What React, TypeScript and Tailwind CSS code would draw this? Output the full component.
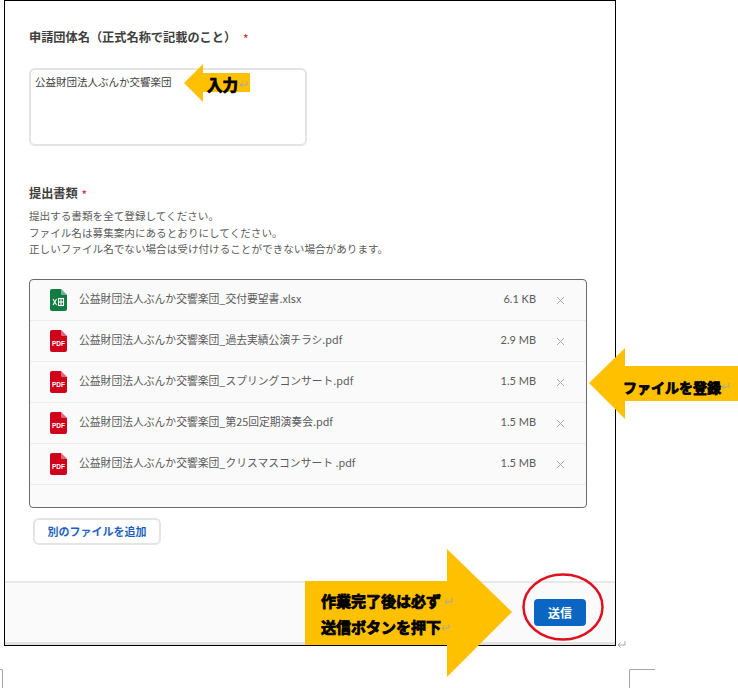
import React from 'react'

const jp = '[font-family:"Noto_Sans_CJK_JP","Liberation_Sans",sans-serif]'

const files = [
  { name: '公益財団法人ぶんか交響楽団_交付要望書.xlsx', size: '6.1 KB', type: 'xlsx' },
  { name: '公益財団法人ぶんか交響楽団_過去実績公演チラシ.pdf', size: '2.9 MB', type: 'pdf' },
  { name: '公益財団法人ぶんか交響楽団_スプリングコンサート.pdf', size: '1.5 MB', type: 'pdf' },
  { name: '公益財団法人ぶんか交響楽団_第25回定期演奏会.pdf', size: '1.5 MB', type: 'pdf' },
  { name: '公益財団法人ぶんか交響楽団_クリスマスコンサート .pdf', size: '1.5 MB', type: 'pdf' },
]

const FileIcon = ({ type }: { type: string }) => {
  const color = type === 'pdf' ? '#d0021b' : '#107c41'
  return (
    <svg width="17" height="22" viewBox="0 0 17 22" className="shrink-0">
      <path d="M2 0H11L17 6V20a2 2 0 0 1-2 2H2a2 2 0 0 1-2-2V2a2 2 0 0 1 2-2Z" fill={color} />
      <path d="M11 0L17 6H12a1 1 0 0 1-1-1Z" fill="#fff" fillOpacity="0.4" />
      {type === 'pdf' ? (
        <text x="8.5" y="16" textAnchor="middle" fontSize="6.5" fontWeight="700" fill="#fff" fontFamily="Liberation Sans">PDF</text>
      ) : (
        <g fill="none" stroke="#fff" strokeWidth="1.1">
          <path d="M3 10l3.5 6M6.5 10L3 16" />
          <rect x="8.5" y="9.5" width="5" height="7" />
          <path d="M8.5 13h5M11 9.5v7" />
        </g>
      )}
    </svg>
  )
}

const ReturnMark = ({ className }: { className: string }) => (
  <svg width="9" height="9" viewBox="0 0 9 9" className={`absolute ${className}`}>
    <path d="M8 1v4H1M3.5 2.5L1 5l2.5 2.5" fill="none" stroke="#a6a6a6" strokeWidth="1" />
  </svg>
)

const Note = ({ className, children }: { className: string; children: React.ReactNode }) => (
  <span className={`absolute whitespace-nowrap font-bold text-black [-webkit-text-stroke:0.8px_black] ${className}`}>{children}</span>
)

export default function App() {
  return (
    <div className={`relative w-[738px] h-[688px] overflow-hidden bg-white ${jp}`}>
      <div className="ml-1 flex h-[646px] w-[612px] flex-col border border-black bg-white">
        <div className="flex-1 pl-[24px] pr-[29px]">
          <div className="mt-[27px] flex h-[18px] items-center text-[12.2px] font-bold text-[#3e3e3c]">
            申請団体名（正式名称で記載のこと）<span className="ml-[7px] text-[10px] text-[#d0404a]">*</span>
          </div>
          <div className="mt-[22px] h-[78px] w-[278px] rounded-md border-2 border-[#e4e4e4] px-[4px] py-[4px] text-[10.5px] leading-[16px] text-[#3e3e3c]">
            公益財団法人ぶんか交響楽団
          </div>
          <div className="mt-[38px] flex h-[18px] items-center text-[12.2px] font-bold text-[#3e3e3c]">
            提出書類<span className="ml-[4px] text-[10px] text-[#d0404a]">*</span>
          </div>
          <div className="mt-[6px] text-[10.6px] leading-[16.5px] text-[#5c5c5c]">
            <p>提出する書類を全て登録してください。</p>
            <p>ファイル名は募集案内にあるとおりにしてください。</p>
            <p>正しいファイル名でない場合は受け付けることができない場合があります。</p>
          </div>
          <div className="mt-[21px] h-[229px] w-[558px] rounded border border-[#6b6b6b] bg-[#fafafa]">
            {files.map((f) => (
              <div key={f.name} className="flex h-[41px] items-center border-b border-[#eeeeee] pl-[20px] pr-[21px] text-[#5a5a5a]">
                <FileIcon type={f.type} />
                <span className="ml-[12px] -mt-0.5 flex-1 text-[10.8px]">{f.name}</span>
                <span className="-mt-px text-[11px] [font-family:Lato,sans-serif]">{f.size}</span>
                <svg width="9" height="9" viewBox="0 0 9 9" className="ml-[20px] mt-0.5">
                  <path d="M1 1l7 7M8 1l-7 7" stroke="#a8a8a8" strokeWidth="1" />
                </svg>
              </div>
            ))}
          </div>
          <button className="ml-[4px] mt-[10px] flex h-[27px] w-[128px] items-center justify-center rounded-md border-2 border-[#e4e4e4] bg-white text-[11px] font-bold text-[#1e62c0]">
            別のファイルを追加
          </button>
        </div>
        <div className="flex h-[64px] shrink-0 items-start justify-end border-t-2 border-b-[3px] border-t-[#e8e8e8] border-b-[#e2e2e2] bg-[#fafafa] pr-[29px] pt-[16px]">
          <button className="h-[27px] w-[52px] rounded bg-[#0b66c3] text-[12px] font-bold text-white">送信</button>
        </div>
      </div>

      {/* annotations on top of the screenshot */}
      <svg width="738" height="688" viewBox="0 0 738 688" className="absolute left-0 top-0">
        <path d="M184 83L203 64V73H250V92H203V102Z" fill="#ffc000" />
        <path d="M589 383L625 348V366H738V401H625V419Z" fill="#ffc000" />
        <path d="M305 581H447V549L512 612L447 677V645H305Z" fill="#ffc000" />
        <ellipse cx="563" cy="607" rx="39.5" ry="32.5" fill="none" stroke="#e0101e" strokeWidth="2.5" />
        <path d="M2.5 669.5V688M0 669.5H2.5M629.5 688V669.5H655" fill="none" stroke="#a6a6a6" strokeWidth="1" />
      </svg>
      <Note className="left-[207px] top-[75px] text-[15.5px] leading-[18px]">入力</Note>
      <Note className="left-[623px] top-[378px] text-[14px] leading-[18px]">ファイルを登録</Note>
      <Note className="left-[321px] top-[592px] text-[15px] leading-[18px]">作業完了後は必ず</Note>
      <Note className="left-[321px] top-[618px] text-[15px] leading-[18px]">送信ボタンを押下</Note>
      <ReturnMark className="left-[239px] top-[80px]" />
      <ReturnMark className="left-[721px] top-[382px]" />
      <ReturnMark className="left-[444px] top-[597px]" />
      <ReturnMark className="left-[441px] top-[623px]" />
      <ReturnMark className="left-[617px] top-[640px]" />
    </div>
  )
}
